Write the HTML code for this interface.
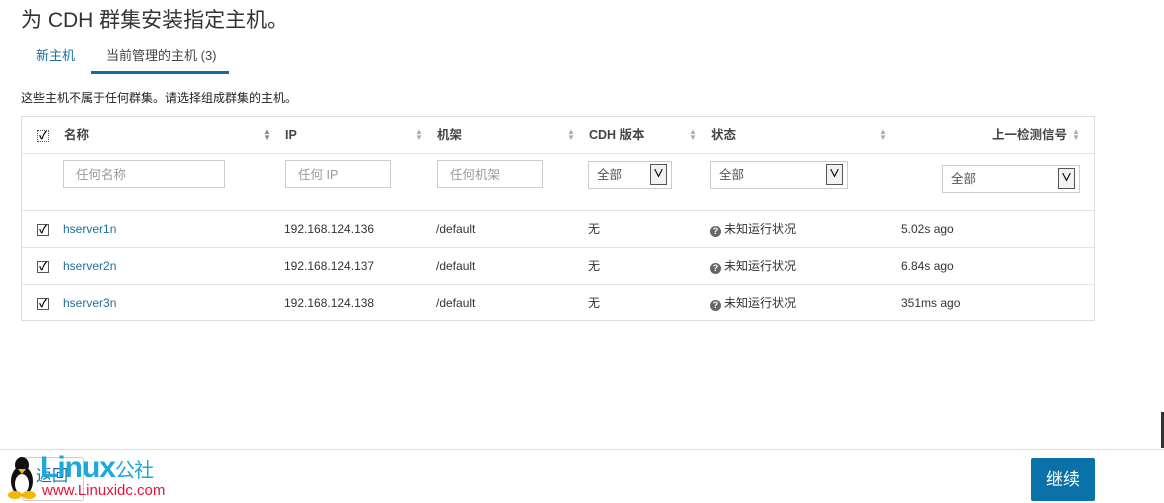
<!DOCTYPE html>
<html><head><meta charset="utf-8"><style>
*{box-sizing:border-box;margin:0;padding:0}
body{width:1164px;height:503px;overflow:hidden;background:#fff;font-family:"Liberation Sans","Noto Sans CJK SC",sans-serif;color:#333;position:relative;font-size:12px;line-height:14px}
.a{position:absolute}
h1{position:absolute;left:21px;top:9px;font-size:21px;line-height:24px;font-weight:normal;color:#333}
.tab{position:absolute;top:48px;font-size:13px;line-height:15px}
.tbl{position:absolute;left:21px;top:116px;width:1074px;height:205px;border:1px solid #ddd}
.hl{position:absolute;left:0;width:1072px;height:1px;background:#e2e2e2}
.th{position:absolute;top:11px;font-weight:bold;font-size:12.5px;line-height:14px;color:#444}
.sort{position:absolute;top:12px;font-size:8px;color:#aab;line-height:6px}
.inp{position:absolute;border:1px solid #ccc;height:28px;color:#999;font-size:12.5px;padding:0 12px;line-height:28px}
.sel{position:absolute;border:1px solid #ccc;height:28px;font-size:12.5px;padding:0 8px;line-height:26px;color:#555}
.sel b{position:absolute;right:4px;top:2px;width:17px;height:21px;border:1px solid #555;background:#f2f2f2;font-size:11px;text-align:center;line-height:19px;font-weight:bold;color:#000}
.cb{position:absolute;width:12px;height:12px;border:1px solid #555;font-size:11px;line-height:10px;text-align:center;color:#000;font-weight:bold}
.r{position:absolute;font-size:12px;line-height:14px;color:#333}
.lnk{color:#1c6fa0}
.q{display:inline-block;width:11px;height:11px;border-radius:50%;background:#666;color:#fff;font-size:9px;line-height:11px;text-align:center;font-weight:bold;vertical-align:-1px;margin-right:3px}
</style></head><body>
<h1>为 CDH 群集安装指定主机。</h1>
<div class="tab" style="left:36px;color:#1c6fa0">新主机</div>
<div class="tab" style="left:106px;color:#444">当前管理的主机 (3)</div>
<div class="a" style="left:91px;top:71px;width:138px;height:3px;background:#0a6e9e"></div>
<div class="a" style="left:21px;top:91px;font-size:12px;color:#222">这些主机不属于任何群集。请选择组成群集的主机。</div>
<div class="tbl">
<div class="hl" style="top:36px"></div>
<div class="hl" style="top:93px"></div>
<div class="hl" style="top:130px"></div>
<div class="hl" style="top:167px"></div>
<div class="cb" style="left:15px;top:13px;border-style:dotted">✓</div>
<div class="th" style="left:42px">名称</div><div class="sort" style="left:241px;color:#889">▲<br>▼</div>
<div class="th" style="left:263px">IP</div><div class="sort" style="left:393px">▲<br>▼</div>
<div class="th" style="left:415px">机架</div><div class="sort" style="left:545px">▲<br>▼</div>
<div class="th" style="left:567px">CDH 版本</div><div class="sort" style="left:667px">▲<br>▼</div>
<div class="th" style="left:689px">状态</div><div class="sort" style="left:857px">▲<br>▼</div>
<div class="th" style="left:970px">上一检测信号</div><div class="sort" style="left:1050px">▲<br>▼</div>
<div class="inp" style="left:41px;top:43px;width:162px">任何名称</div>
<div class="inp" style="left:263px;top:43px;width:106px">任何 IP</div>
<div class="inp" style="left:415px;top:43px;width:106px">任何机架</div>
<div class="sel" style="left:566px;top:44px;width:84px">全部<b>∨</b></div>
<div class="sel" style="left:688px;top:44px;width:138px">全部<b>∨</b></div>
<div class="sel" style="left:920px;top:48px;width:138px">全部<b>∨</b></div>
<div class="cb" style="left:15px;top:107px">✓</div>
<div class="cb" style="left:15px;top:144px">✓</div>
<div class="cb" style="left:15px;top:181px">✓</div>
<div class="r lnk" style="left:41px;top:105px">hserver1n</div>
<div class="r lnk" style="left:41px;top:142px">hserver2n</div>
<div class="r lnk" style="left:41px;top:179px">hserver3n</div>
<div class="r" style="left:262px;top:105px">192.168.124.136</div>
<div class="r" style="left:262px;top:142px">192.168.124.137</div>
<div class="r" style="left:262px;top:179px">192.168.124.138</div>
<div class="r" style="left:414px;top:105px">/default</div>
<div class="r" style="left:414px;top:142px">/default</div>
<div class="r" style="left:414px;top:179px">/default</div>
<div class="r" style="left:566px;top:105px">无</div>
<div class="r" style="left:566px;top:142px">无</div>
<div class="r" style="left:566px;top:179px">无</div>
<div class="r" style="left:688px;top:105px"><span class="q">?</span>未知运行状况</div>
<div class="r" style="left:688px;top:142px"><span class="q">?</span>未知运行状况</div>
<div class="r" style="left:688px;top:179px"><span class="q">?</span>未知运行状况</div>
<div class="r" style="left:879px;top:105px">5.02s ago</div>
<div class="r" style="left:879px;top:142px">6.84s ago</div>
<div class="r" style="left:879px;top:179px">351ms ago</div>
</div>
<div class="a" style="left:1161px;top:412px;width:3px;height:36px;background:#333"></div>
<div class="a" style="left:0;top:449px;width:1164px;height:1px;background:#ddd"></div>
<div class="a" style="left:22px;top:457px;width:62px;height:44px;border:1px solid #ccc;border-radius:3px"></div>
<div class="a" style="left:8px;top:455px;width:28px;height:44px">
<svg width="28" height="44" viewBox="0 0 28 44"><ellipse cx="14" cy="26" rx="11" ry="15" fill="#111"/><ellipse cx="14" cy="29" rx="7" ry="10" fill="#fff"/><ellipse cx="14" cy="10" rx="7" ry="8" fill="#111"/><path d="M10 14 L18 14 L14 19Z" fill="#f5b800"/><ellipse cx="7" cy="40" rx="7" ry="4" fill="#f5b800"/><ellipse cx="21" cy="40" rx="7" ry="4" fill="#f5b800"/></svg></div>
<div class="a" style="left:36px;top:468px;font-size:16px;line-height:18px;color:#1c6fa0">返回</div>
<div class="a" style="left:40px;top:452px;font-size:30px;font-weight:bold;color:#1ba8dd;letter-spacing:-1px;line-height:32px">Linux<span style="font-size:20px;font-weight:normal">公社</span></div>
<div class="a" style="left:42px;top:483px;font-size:15px;color:#e8113a;line-height:16px">www.Linuxidc.com</div>
<div class="a" style="left:1031px;top:458px;width:64px;height:43px;background:#0a72a8;border-radius:2px;color:#fff;font-size:17px;text-align:center;line-height:43px">继续</div>
</body></html>
